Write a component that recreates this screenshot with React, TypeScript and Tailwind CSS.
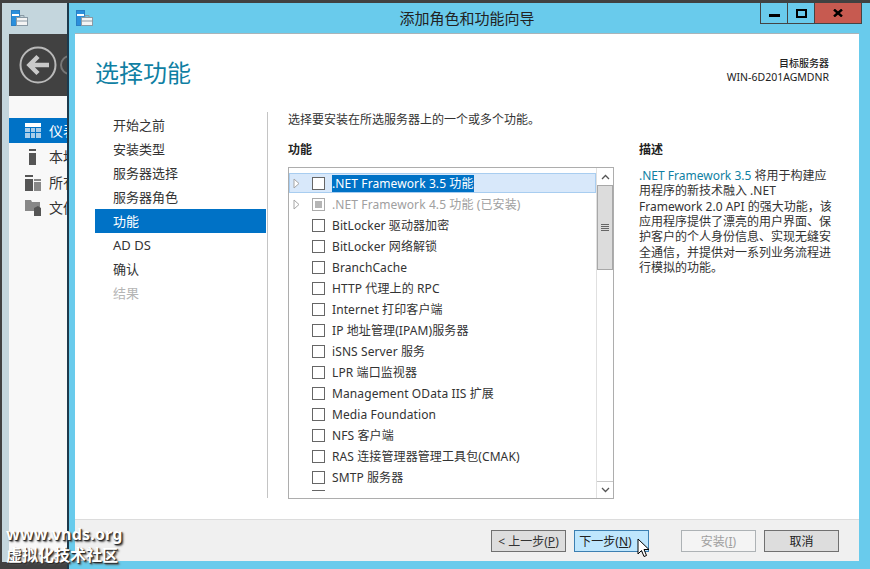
const font = "font-['Noto_Sans','Noto_Sans_CJK_SC',sans-serif]";

function ServerIcon() {
  return (
    <svg width="17" height="17" viewBox="0 0 17 17" className="block">
      <rect x="0.5" y="0.5" width="8" height="15" fill="#fff" stroke="#2a7fc4" />
      <rect x="1" y="1" width="7" height="3" fill="#2a8fdc" />
      <rect x="1" y="6" width="7" height="9" fill="#2a8fdc" />
      <rect x="5.5" y="7.5" width="11" height="8" fill="#f4f4f4" stroke="#8a9aa5" />
      <path d="M9 7.5V5.5H13V7.5M6 11H16" fill="none" stroke="#8a9aa5" />
    </svg>
  );
}

function BackArrow() {
  return (
    <svg width="40" height="40" viewBox="0 0 40 40" className="block shrink-0">
      <circle cx="20" cy="20" r="17.5" fill="none" stroke="#b9b9b9" strokeWidth="2" />
      <path d="M31 20H12M20 11.5L11.5 20L20 28.5" fill="none" stroke="#c9c9c9" strokeWidth="4.5" />
    </svg>
  );
}

function NavIcon({ kind }: { kind: number }) {
  if (kind === 0)
    return (
      <svg width="16" height="16" viewBox="0 0 16 16" className="block shrink-0">
        <rect width="16" height="4" fill="#fff" />
        <path d="M0 5h5v4H0zM6 5h4v4H6zM11 5h5v4h-5zM0 10h5v5H0zM6 10h4v5H6zM11 10h5v5h-5z" fill="#a9cde9" />
      </svg>
    );
  if (kind === 1)
    return (
      <svg width="16" height="16" viewBox="0 0 16 16" className="block shrink-0">
        <rect x="4" y="0" width="7" height="2" fill="#555" />
        <rect x="4" y="4" width="7" height="12" fill="#555" />
      </svg>
    );
  if (kind === 2)
    return (
      <svg width="16" height="16" viewBox="0 0 16 16" className="block shrink-0">
        <rect x="0" y="0" width="8" height="2" fill="#555" />
        <rect x="0" y="4" width="8" height="12" fill="#555" />
        <rect x="9" y="4" width="7" height="2" fill="#888" />
        <rect x="9" y="7" width="7" height="9" fill="#888" />
      </svg>
    );
  return (
    <svg width="16" height="17" viewBox="0 0 16 17" className="block shrink-0">
      <path d="M0 1H6L7 3H15V12H0Z" fill="#888" />
      <path d="M9 9L13 7L16 9V17H9Z" fill="#555" />
    </svg>
  );
}

const steps = ["开始之前", "安装类型", "服务器选择", "服务器角色", "功能", "AD DS", "确认", "结果"];

const features = [
  "BitLocker 驱动器加密",
  "BitLocker 网络解锁",
  "BranchCache",
  "HTTP 代理上的 RPC",
  "Internet 打印客户端",
  "IP 地址管理(IPAM)服务器",
  "iSNS Server 服务",
  "LPR 端口监视器",
  "Management OData IIS 扩展",
  "Media Foundation",
  "NFS 客户端",
  "RAS 连接管理器管理工具包(CMAK)",
  "SMTP 服务器",
];

function Caret() {
  return (
    <svg width="7" height="11" viewBox="0 0 7 11" className="block shrink-0">
      <path d="M1 1L6 5.5L1 10Z" fill="#fff" stroke="#a6a6a6" />
    </svg>
  );
}

function WizardButton({ children, className }: { children: React.ReactNode; className: string }) {
  return (
    <div className={`w-[75px] h-[22px] border flex items-center justify-center pt-[2px] text-[12px] leading-none ${className}`}>
      {children}
    </div>
  );
}

export default function App() {
  return (
    <div className={`${font} w-[870px] h-[569px] overflow-hidden flex flex-col bg-[#414141] relative text-[#333]`}>
      <div className="h-[3px] shrink-0 bg-[#414141]" />
      <div className="flex flex-1 min-h-0">
        {/* window behind the wizard */}
        <div className="w-[67px] shrink-0 flex flex-col overflow-hidden pl-[2px]">
          <div className="flex-1 min-h-0 flex flex-col bg-[#c4d6dd] pl-[7px]">
            <div className="h-[31px] shrink-0 flex items-start pl-[2px] pt-[7px]">
              <ServerIcon />
            </div>
            <div className="h-[62px] shrink-0 bg-[#414141] flex items-center pl-[9px] gap-[2px] overflow-hidden">
              <BackArrow />
              <div className="w-[20px] h-[20px] shrink-0 rounded-full border-2 border-[#777]" />
            </div>
            <div className="flex-1 bg-[#f8f8f8] pt-[22px] overflow-hidden">
              <div className="h-[25px] bg-[#0072c6] text-white flex items-center pl-[16px] gap-[8px] text-[14px] whitespace-nowrap">
                <NavIcon kind={0} />
                仪表板
              </div>
              <div className="h-[25px] flex items-center pl-[16px] gap-[8px] mt-[1px] text-[14px] whitespace-nowrap">
                <NavIcon kind={1} />
                本地服务器
              </div>
              <div className="h-[25px] flex items-center pl-[16px] gap-[8px] mt-[1px] text-[14px] whitespace-nowrap">
                <NavIcon kind={2} />
                所有服务器
              </div>
              <div className="h-[25px] flex items-center pl-[16px] gap-[8px] text-[14px] whitespace-nowrap">
                <NavIcon kind={3} />
                文件和存储
              </div>
            </div>
          </div>
          <div className="h-[7px] shrink-0" />
        </div>

        {/* wizard */}
        <div className="flex-1 flex flex-col bg-[#69cbec] border-l-2 border-[#1e3a4c] min-w-0">
          <div className="h-[30px] shrink-0 flex">
            <div className="w-[110px] pl-[7px] pt-[7px]">
              <ServerIcon />
            </div>
            <div className="flex-1 text-center text-[15px] leading-[30px] text-[#222] pr-[5px]">添加角色和功能向导</div>
            <div className="w-[110px] flex h-[21px]">
              <div className="w-[28px] border border-t-0 border-[#444] flex items-center justify-center">
                <div className="w-[11px] h-[3px] bg-black mt-[5px]" />
              </div>
              <div className="w-[27px] border border-t-0 border-l-0 border-[#444] flex items-center justify-center">
                <div className="w-[11px] h-[9px] border-2 border-black" />
              </div>
              <div className="w-[47px] border border-t-0 border-l-0 border-[#444] bg-[#c75a50] flex items-center justify-center">
                <svg width="10" height="8" viewBox="0 0 10 8" className="block">
                  <path d="M1 0.5L9 7.5M9 0.5L1 7.5" stroke="#000" strokeWidth="2.4" fill="none" />
                </svg>
              </div>
            </div>
          </div>

          <div className="flex-1 mx-[6px] mb-[8px] mr-[11px] bg-white border-t border-[#a9b4b9] flex flex-col min-h-0">
            <div className="h-[79px] shrink-0 flex justify-between pl-[20px] pr-[30px]">
              <div className="text-[24px] leading-none pt-[27px] text-[#0f7fa3]">选择功能</div>
              <div className="text-right text-[10.5px] leading-[14px] pt-[22px] text-[#222]">
                <div className="text-[10px] font-medium">目标服务器</div>
                <div>WIN-6D201AGMDNR</div>
              </div>
            </div>

            <div className="flex-1 min-h-0 flex items-start">
              {/* steps */}
              <div className="w-[171px] ml-[20px] mr-[1px] shrink-0 flex flex-col text-[13px]">
                {steps.map((s, i) => (
                  <div
                    key={s}
                    className={`h-[24px] leading-[24px] pl-[18px] ${
                      i === 4 ? "bg-[#0072c6] text-white" : i === 7 ? "text-[#b5b5b5]" : "text-[#333]"
                    }`}
                  >
                    {s}
                  </div>
                ))}
              </div>
              <div className="w-[1px] h-[386px] mt-[-1px] bg-[#c4c4c4] shrink-0" />

              <div className="ml-[20px] w-[326px] shrink-0 flex flex-col text-[12px]">
                <div className="leading-[12px] mt-[1px]">选择要安装在所选服务器上的一个或多个功能。</div>
                <div className="font-bold leading-[12px] mt-[18px] text-[#222]">功能</div>
                <div className="mt-[11px] h-[332px] border-[1.5px] border-[#adadad] bg-white flex overflow-hidden">
                  <div className="flex-1 min-w-0 overflow-hidden pt-[5px] tracking-[0.1px]">
                    <div className="h-[20px] mb-[1px] bg-[#d8e8fa] border border-[#a8cdf0] flex items-center pl-[3px]">
                      <Caret />
                      <div className="w-[13px] h-[13px] ml-[12px] border border-[#666] bg-white shrink-0" />
                      <span className="ml-[7px] bg-[#0072c6] text-white leading-[16px] pt-[1px]">.NET Framework 3.5 功能</span>
                    </div>
                    <div className="h-[20px] mb-[1px] flex items-center pl-[4px] text-[#a0a0a0]">
                      <Caret />
                      <div className="w-[13px] h-[13px] ml-[12px] border border-[#aaa] bg-white shrink-0 flex items-center justify-center">
                        <div className="w-[7px] h-[7px] bg-[#b5b5b5]" />
                      </div>
                      <span className="ml-[7px] pt-[2px]">.NET Framework 4.5 功能 (已安装)</span>
                    </div>
                    {features.map((f) => (
                      <div key={f} className="h-[20px] mb-[1px] flex items-center pl-[23px] whitespace-nowrap">
                        <div className="w-[13px] h-[13px] border border-[#666] bg-white shrink-0" />
                        <span className="ml-[7px] pt-[2px]">{f}</span>
                      </div>
                    ))}
                    <div className="mt-[3px] ml-[23px] w-[13px] border-t border-[#666]" />
                  </div>
                  <div className="w-[17px] shrink-0 flex flex-col border-l border-[#e0e0e0]">
                    <div className="h-[17px] shrink-0 flex items-center justify-center">
                      <svg width="9" height="6" viewBox="0 0 9 6" className="block">
                        <path d="M1 5L4.5 1.5L8 5" fill="none" stroke="#555" strokeWidth="1.3" />
                      </svg>
                    </div>
                    <div className="h-[85px] shrink-0 bg-[#dcdcdc] border border-[#a8a8a8] flex flex-col items-center justify-center gap-[1px]">
                      <div className="w-[8px] h-[1px] bg-[#666]" />
                      <div className="w-[8px] h-[1px] bg-[#666]" />
                      <div className="w-[8px] h-[1px] bg-[#666]" />
                      <div className="w-[8px] h-[1px] bg-[#666]" />
                    </div>
                    <div className="flex-1" />
                    <div className="h-[17px] shrink-0 border-t border-[#c8c8c8] flex items-center justify-center">
                      <svg width="9" height="6" viewBox="0 0 9 6" className="block">
                        <path d="M1 1L4.5 4.5L8 1" fill="none" stroke="#555" strokeWidth="1.3" />
                      </svg>
                    </div>
                  </div>
                </div>
              </div>

              <div className="ml-[25px] w-[195px] shrink-0 text-[12px] mt-[31px]">
                <div className="font-bold leading-[12px] text-[#222]">描述</div>
                <div className="mt-[12px] leading-[15.35px]">
                  <div className="whitespace-nowrap">
                    <span className="text-[#0f7fa3]">.NET Framework 3.5</span> 将用于构建应
                  </div>
                  <div className="whitespace-nowrap">用程序的新技术融入 .NET</div>
                  <div className="whitespace-nowrap">Framework 2.0 API 的强大功能，该</div>
                  <div className="whitespace-nowrap">应用程序提供了漂亮的用户界面、保</div>
                  <div className="whitespace-nowrap">护客户的个人身份信息、实现无缝安</div>
                  <div className="whitespace-nowrap">全通信，并提供对一系列业务流程进</div>
                  <div className="whitespace-nowrap">行模拟的功能。</div>
                </div>
              </div>
            </div>

            <div className="h-[42px] shrink-0 bg-[#f0f0f0] border-t border-[#dcdcdc] flex items-start pt-[10px] pl-[416px]">
              <WizardButton className="bg-[#dddddd] border-[#707070] text-[#333]">&lt; 上一步(<u>P</u>)</WizardButton>
              <WizardButton className="ml-[8px] bg-[#bee6fd] border-[#3c7fb1] text-[#222] pr-[12px]">下一步(<u>N</u>)</WizardButton>
              <WizardButton className="ml-[32px] bg-[#f4f4f4] border-[#adb2b5] text-[#a0a0a0]">安装(<u>I</u>)</WizardButton>
              <WizardButton className="ml-[8px] bg-[#dddddd] border-[#707070] text-[#222]">取消</WizardButton>
            </div>
          </div>
        </div>
      </div>

      {/* mouse pointer */}
      <svg width="13" height="20" viewBox="0 0 13 20" className="absolute left-[637px] top-[538px]">
        <path d="M1 1V16L4.5 12.5L7 18.5L9.5 17.5L7 11.5H12Z" fill="#fff" stroke="#000" />
      </svg>

      {/* watermark */}
      <div className="absolute left-[6px] top-[524px] text-white font-bold text-[16px] leading-[21px] [text-shadow:1px_1px_1px_#222,2px_2px_2px_#555]">
        <div className="tracking-[0.2px]">www.vnds.org</div>
        <div>虚拟化技术社区</div>
      </div>
    </div>
  );
}
